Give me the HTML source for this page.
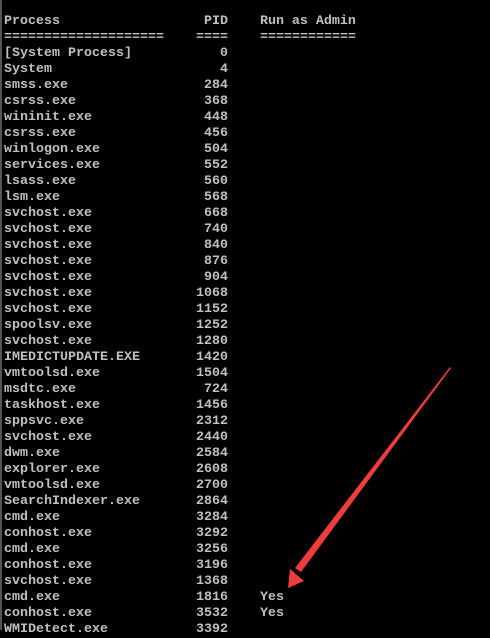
<html><head><style>
body{margin:0;background:#000;width:490px;height:630px;overflow:hidden;position:relative}
pre{position:absolute;left:4px;top:14px;margin:0;font-family:"Liberation Mono",monospace;font-size:13.33px;line-height:16px;color:#c0c0c0;font-weight:bold}
.s{position:absolute;left:0;top:0;width:2px;height:630px;background:#555}
</style></head><body><div class="s"></div>
<pre>Process                  PID    Run as Admin
====================    ====    ============
[System Process]           0
System                     4
smss.exe                 284
csrss.exe                368
wininit.exe              448
csrss.exe                456
winlogon.exe             504
services.exe             552
lsass.exe                560
lsm.exe                  568
svchost.exe              668
svchost.exe              740
svchost.exe              840
svchost.exe              876
svchost.exe              904
svchost.exe             1068
svchost.exe             1152
spoolsv.exe             1252
svchost.exe             1280
IMEDICTUPDATE.EXE       1420
vmtoolsd.exe            1504
msdtc.exe                724
taskhost.exe            1456
sppsvc.exe              2312
svchost.exe             2440
dwm.exe                 2584
explorer.exe            2608
vmtoolsd.exe            2700
SearchIndexer.exe       2864
cmd.exe                 3284
conhost.exe             3292
cmd.exe                 3256
conhost.exe             3196
svchost.exe             1368
cmd.exe                 1816    Yes
conhost.exe             3532    Yes
WMIDetect.exe           3392</pre>
<svg width="490" height="630" style="position:absolute;left:0;top:0">
<polygon points="450,367 451,368 301,572 295,568" fill="#f03c3c"/>
<polygon points="288,588 290,569 304,581" fill="#f03c3c"/>
</svg>
</body></html>
